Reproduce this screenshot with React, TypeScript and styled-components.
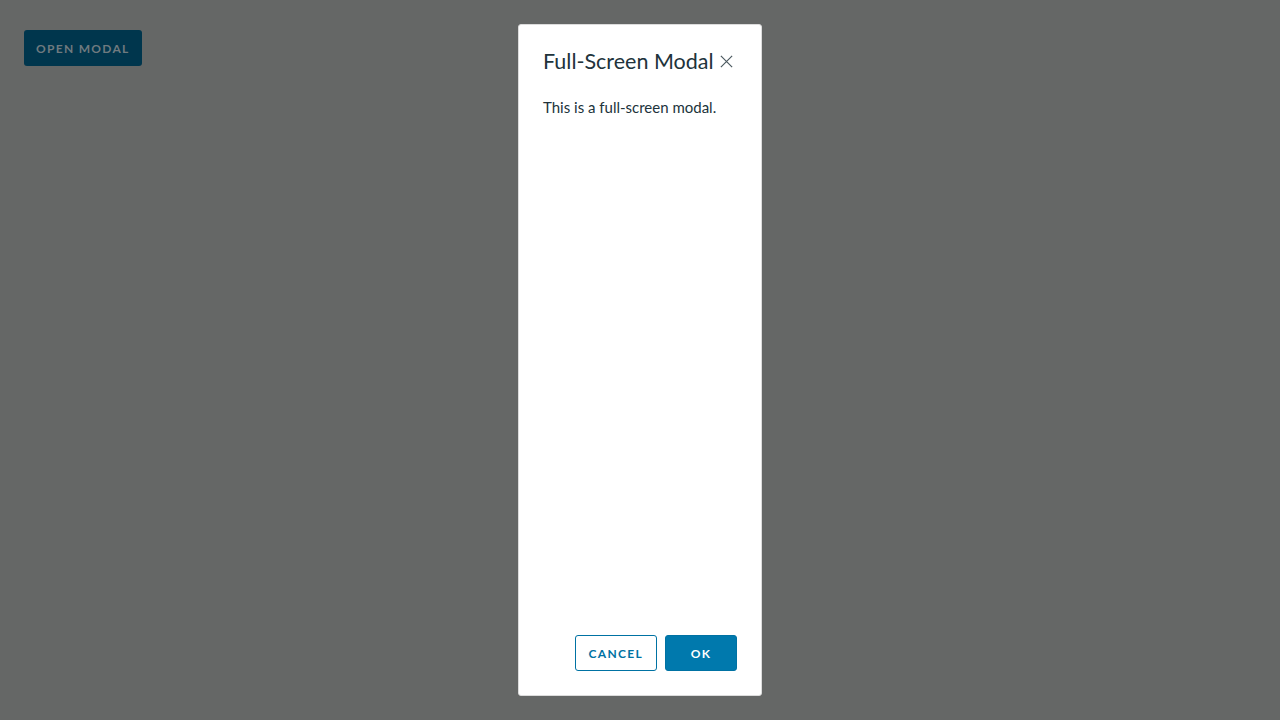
import styled, { createGlobalStyle } from "styled-components";

const GlobalStyle = createGlobalStyle`
  html, body {
    margin: 0;
    padding: 0;
    height: 100%;
  }
  body {
    font-family: "Lato", "Open Sans", sans-serif;
    background-color: #656766;
  }
`;

const Page = styled.div`
  width: 1280px;
  height: 720px;
  padding: 30px 24px;
  box-sizing: border-box;
  background-color: #656766;
`;

const OpenButton = styled.button`
  height: 36px;
  padding: 0 12px;
  border: none;
  border-radius: 3px;
  background-color: #00364d;
  color: #6f7a7f;
  font-family: "Lato", sans-serif;
  font-weight: 700;
  font-size: 12px;
  letter-spacing: 1.3px;
  text-transform: uppercase;
`;

const Backdrop = styled.div`
  position: fixed;
  inset: 0;
  display: flex;
  justify-content: center;
  align-items: stretch;
  padding: 24px 0;
  box-sizing: border-box;
`;

const Modal = styled.div`
  width: 244px;
  box-sizing: border-box;
  display: flex;
  flex-direction: column;
  padding: 24px;
  background-color: #ffffff;
  border: 1px solid #dcdcdc;
  border-radius: 3px;
`;

const Header = styled.div`
  display: flex;
  align-items: center;
  gap: 5px;
  height: 24px;
`;

const Title = styled.h3`
  margin: 0;
  font-family: "Lato", sans-serif;
  font-weight: 400;
  font-size: 21.5px;
  line-height: 24px;
  color: #21333b;
  white-space: nowrap;
`;

const CloseButton = styled.button`
  display: flex;
  padding: 0;
  border: none;
  background: none;
  color: #4d5a60;
`;

const Body = styled.div`
  flex: 1;
  padding-top: 25px;
  font-size: 15px;
  color: #21333b;
`;

const Footer = styled.div`
  display: flex;
  justify-content: flex-end;
  gap: 8px;
`;

const ActionButton = styled.button<{ $primary?: boolean }>`
  height: 36px;
  padding: 0 ${(p) => (p.$primary ? "24px" : "13px")};
  min-width: 72px;
  border-radius: 3px;
  border: 1px solid #0072a3;
  background-color: ${(p) => (p.$primary ? "#0079ad" : "#ffffff")};
  color: ${(p) => (p.$primary ? "#ffffff" : "#0072a3")};
  font-family: "Lato", sans-serif;
  font-weight: 700;
  font-size: 12px;
  letter-spacing: 1.3px;
  text-transform: uppercase;
`;

export default function App() {
  return (
    <>
      <GlobalStyle />
      <Page>
        <OpenButton>Open Modal</OpenButton>
      </Page>
      <Backdrop>
        <Modal>
          <Header>
            <Title>Full-Screen Modal</Title>
            <CloseButton aria-label="Close">
              <svg width="15" height="15" viewBox="0 0 16 16" fill="none" stroke="currentColor" strokeWidth="1.3">
                <path d="M2 2 L14 14 M14 2 L2 14" />
              </svg>
            </CloseButton>
          </Header>
          <Body>This is a full-screen modal.</Body>
          <Footer>
            <ActionButton>Cancel</ActionButton>
            <ActionButton $primary>OK</ActionButton>
          </Footer>
        </Modal>
      </Backdrop>
    </>
  );
}
